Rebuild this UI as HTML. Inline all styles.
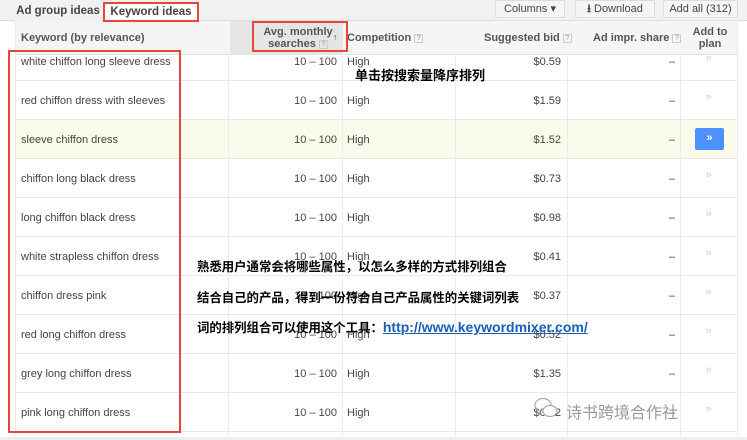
<!DOCTYPE html>
<html><head><meta charset="utf-8"><style>
*{margin:0;padding:0;box-sizing:border-box}
body{width:747px;height:440px;overflow:hidden;background:#fff;font-family:"Liberation Sans",Arial,sans-serif;font-size:11px;color:#333;position:relative}
.abs{position:absolute}
.top{left:0;top:0;width:747px;height:21px;background:#f1f1f1;border-bottom:1px solid #ddd}
.tab{top:2px;height:20px;line-height:19px;font-size:11.5px;font-weight:bold;color:#444;text-align:center}
.btn{top:0;height:18px;line-height:16px;border:1px solid #ddd;background:#f5f5f5;font-size:11px;color:#444;text-align:center;border-radius:2px}
.hdr{left:15px;top:21px;width:722px;height:34px;background:#f5f5f5;border-bottom:1px solid #e0e0e0}
.h{font-weight:bold;color:#555;font-size:11px}
.q{display:inline-block;width:9px;height:9px;border:1px solid #ccc;font-size:7px;line-height:7px;text-align:center;color:#999;vertical-align:middle;font-weight:normal}
.row{left:15px;width:722px;height:39px;border-bottom:1px solid #e8e8e8}
.vl{top:21px;width:1px;height:416px;background:#ececec}
.cell{font-size:11px;color:#444}
.cn{font-family:"Liberation Sans","Noto Sans CJK SC",sans-serif;font-weight:bold;color:#000;font-size:12.4px;white-space:nowrap}
.red{border:2px solid #e5473b}
</style></head><body>
<div class="abs top"></div>
<div class="abs tab" style="left:15px;width:86px;background:#f1f1f1">Ad group ideas</div>
<div class="abs tab" style="left:104px;width:94px;background:#fff;border:1px solid #ddd;border-bottom:none">Keyword ideas</div>
<div class="abs btn" style="left:495px;width:70px">Columns ▾</div>
<div class="abs btn" style="left:575px;width:80px"><b>⭳</b> Download</div>
<div class="abs btn" style="left:663px;width:75px">Add all (312)</div>

<div class="abs hdr"></div>
<div class="abs" style="left:230px;top:21px;width:113px;height:34px;background:#e5e5e5"></div>
<div class="abs h" style="left:21px;top:32px">Keyword (by relevance)</div>
<div class="abs h" style="left:258px;top:26px;width:80px;text-align:center;line-height:12px">Avg. monthly<br>searches <span class="q">?</span></div>
<div class="abs h" style="left:333px;top:32px;font-size:9px">↑</div>
<div class="abs h" style="left:347px;top:32px">Competition <span class="q">?</span></div>
<div class="abs h" style="left:484px;top:32px">Suggested bid <span class="q">?</span></div>
<div class="abs h" style="left:593px;top:32px">Ad impr. share <span class="q">?</span></div>
<div class="abs h" style="left:684px;top:26px;width:52px;text-align:center;line-height:12px">Add to<br>plan</div>

<div class="abs" style="left:15px;top:55px;width:722px;height:26px;border-bottom:1px solid #e8e8e8"></div>
<div class="abs row" style="top:81px"></div>
<div class="abs row" style="top:120px;background:#fbfbeb"></div>
<div class="abs row" style="top:159px"></div>
<div class="abs row" style="top:198px"></div>
<div class="abs row" style="top:237px"></div>
<div class="abs row" style="top:276px"></div>
<div class="abs row" style="top:315px"></div>
<div class="abs row" style="top:354px"></div>
<div class="abs row" style="top:393px"></div>
<div class="abs" style="left:0;top:437px;width:747px;height:3px;background:#eee"></div>
<div class="abs vl" style="left:15px"></div>
<div class="abs vl" style="left:228px;top:55px;height:382px"></div>
<div class="abs vl" style="left:342px;top:55px;height:382px"></div>
<div class="abs vl" style="left:455px;top:55px;height:382px"></div>
<div class="abs vl" style="left:567px;top:55px;height:382px"></div>
<div class="abs vl" style="left:680px;top:55px;height:382px"></div>
<div class="abs vl" style="left:737px"></div>

<div id="rows"></div>
<div class="abs cell" style="left:21px;top:56px">white chiffon long sleeve dress</div>
<div class="abs cell" style="left:229px;top:56px;width:108px;text-align:right">10 – 100</div>
<div class="abs cell" style="left:347px;top:56px">High</div>
<div class="abs cell" style="left:456px;top:56px;width:105px;text-align:right">$0.59</div>
<div class="abs cell" style="left:568px;top:56px;width:107px;text-align:right">–</div>
<div class="abs" style="left:680px;top:52px;width:57px;text-align:center;color:#ccc">»</div>

<script>
var d=[["red chiffon dress with sleeves","$1.59"],["sleeve chiffon dress","$1.52"],["chiffon long black dress","$0.73"],["long chiffon black dress","$0.98"],["white strapless chiffon dress","$0.41"],["chiffon dress pink","$0.37"],["red long chiffon dress","$0.52"],["grey long chiffon dress","$1.35"],["pink long chiffon dress","$0.52"]];
var h="";
d.forEach(function(r,i){var t=95+i*39;
h+='<div class="abs cell" style="left:21px;top:'+t+'px">'+r[0]+'</div>';
h+='<div class="abs cell" style="left:229px;top:'+t+'px;width:108px;text-align:right">10 – 100</div>';
h+='<div class="abs cell" style="left:347px;top:'+t+'px">High</div>';
h+='<div class="abs cell" style="left:456px;top:'+t+'px;width:105px;text-align:right">'+r[1]+'</div>';
h+='<div class="abs cell" style="left:568px;top:'+t+'px;width:107px;text-align:right">–</div>';
if(i==1)h+='<div class="abs" style="left:695px;top:'+(t-6)+'px;width:29px;height:22px;background:#4d90fe;border-radius:2px;color:#fff;text-align:center;line-height:20px;font-weight:bold">»</div>';
else h+='<div class="abs" style="left:680px;top:'+(t-4)+'px;width:57px;text-align:center;color:#ccc">»</div>';
});
document.getElementById("rows").innerHTML=h;
</script>

<div class="abs red" style="left:103px;top:2px;width:96px;height:20px"></div>
<div class="abs red" style="left:252px;top:21px;width:96px;height:31px"></div>
<div class="abs red" style="left:8px;top:50px;width:173px;height:383px"></div>

<div class="abs cn" style="left:355px;top:65px;font-size:13px">单击按搜索量降序排列</div>
<div class="abs cn" style="left:197px;top:257px">熟悉用户通常会将哪些属性，以怎么多样的方式排列组合</div>
<div class="abs cn" style="left:197px;top:288px">结合自己的产品，得到一份符合自己产品属性的关键词列表</div>
<div class="abs cn" style="left:197px;top:318px">词的排列组合可以使用这个工具：<span style="color:#1a5fb4;text-decoration:underline;font-family:'Liberation Sans',sans-serif;font-size:14px">http://www.keywordmixer.com/</span></div>

<svg class="abs" style="left:533px;top:396px" width="26" height="24" viewBox="0 0 26 24"><g fill="none" stroke="#aaa" stroke-width="1.2"><ellipse cx="10" cy="9" rx="8" ry="6.5"/><path d="M5 14l-1 4 4-2.5"/><ellipse cx="17" cy="15" rx="7" ry="5.5" fill="#fff"/></g></svg>
<div class="abs" style="left:566px;top:399px;font-family:'Noto Sans CJK SC',sans-serif;font-size:16px;color:#999">诗书跨境合作社</div>
</body></html>
